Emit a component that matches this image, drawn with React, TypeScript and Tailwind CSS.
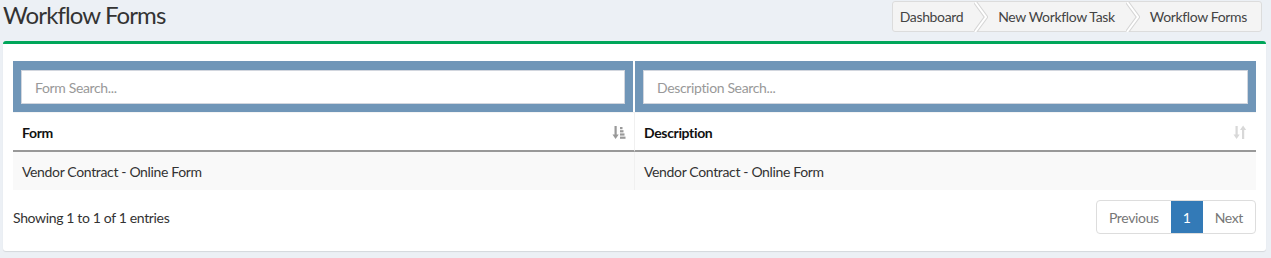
import React from 'react';

const font = { fontFamily: 'Lato, "Liberation Sans", sans-serif', letterSpacing: '-0.35px' };

const Chevron: React.FC = () => (
  <svg width="14" height="30" viewBox="0 0 14 30" className="shrink-0">
    <polyline points="1,0 12,15 1,30" fill="none" stroke="#d6d6d6" strokeWidth="4" />
    <polyline points="1,0 12,15 1,30" fill="none" stroke="#ffffff" strokeWidth="2" />
  </svg>
);

const SortAsc: React.FC = () => (
  <svg width="14" height="15" viewBox="0 0 14 15" fill="#999">
    <rect x="2.5" y="1" width="2.2" height="9.5" />
    <polygon points="0.5,9.5 6.7,9.5 3.6,14" />
    <rect x="8" y="2" width="2.5" height="2.2" />
    <rect x="8" y="5.2" width="3.5" height="2.2" />
    <rect x="8" y="8.4" width="4.5" height="2.2" />
    <rect x="8" y="11.6" width="5.5" height="2.2" />
  </svg>
);

const SortBoth: React.FC = () => (
  <svg width="14" height="15" viewBox="0 0 14 15" fill="#d8d8d8">
    <rect x="2.5" y="1" width="2.2" height="9.5" />
    <polygon points="0.5,9.5 6.7,9.5 3.6,14" />
    <rect x="9" y="4.5" width="2.2" height="9.5" />
    <polygon points="7,5 13.2,5 10.1,0.5" />
  </svg>
);

const App: React.FC = () => {
  const rows = [{ form: 'Vendor Contract - Online Form', description: 'Vendor Contract - Online Form' }];
  return (
    <div className="min-h-[258px] w-[1271px] bg-[#ecf0f5] text-[#333] text-[14px]" style={font}>
      {/* Header */}
      <div className="flex items-start justify-between h-[41px] pl-[3px] pr-[9px]">
        <h1 className="text-[24px] leading-[29px] text-[#333] font-normal tracking-[-0.9px]">Workflow Forms</h1>
        <div className="flex items-stretch h-[31px] mt-[1px] border border-[#dcdcdc] rounded-[3px] bg-[#f4f4f4] text-[#444]">
          <span className="flex items-center pl-[7px] pr-[11px]">Dashboard</span>
          <Chevron />
          <span className="flex items-center pl-[10px] pr-[11px]">New Workflow Task</span>
          <Chevron />
          <span className="flex items-center pl-[10px] pr-[14px]">Workflow Forms</span>
        </div>
      </div>

      {/* Box */}
      <div className="mx-[3px] mr-[5px] bg-white border-t-[3px] border-[#00a65a] rounded-[3px] shadow-[0_1px_1px_rgba(0,0,0,0.1)] px-[10px] pt-[17px] pb-[17px]">
        <div className="grid grid-cols-[622px_1fr]">
          {/* search row */}
          <div className="bg-[#7096b8] pl-[8px] pr-[8px] pt-[9px] pb-[8px] border-r-2 border-white">
            <input
              placeholder="Form Search..."
              className="w-full h-[34px] bg-white border border-[#d2d6de] px-[13px] text-[14px] placeholder:text-[#999] outline-none"
              style={font}
            />
          </div>
          <div className="bg-[#7096b8] pl-[8px] pr-[8px] pt-[9px] pb-[8px]">
            <input
              placeholder="Description Search..."
              className="w-full h-[34px] bg-white border border-[#d2d6de] px-[13px] text-[14px] placeholder:text-[#999] outline-none"
              style={font}
            />
          </div>

          {/* header row */}
          <div className="flex items-center justify-between h-[40px] pl-[9px] pr-[8px] pt-[1px] border-t border-[#f4f4f4] border-r border-r-[#f0f0f0] border-b-2 border-b-[#999] font-bold text-[#111]">
            <span>Form</span>
            <SortAsc />
          </div>
          <div className="flex items-center justify-between h-[40px] pl-[9px] pr-[9px] pt-[1px] border-t border-[#f4f4f4] border-b-2 border-b-[#999] font-bold text-[#111]">
            <span>Description</span>
            <SortBoth />
          </div>

          {/* body rows */}
          {rows.map((r, i) => (
            <React.Fragment key={i}>
              <div className="flex items-center h-[38px] pl-[9px] bg-[#f9f9f9] border-r border-[#f0f0f0]">{r.form}</div>
              <div className="flex items-center h-[38px] pl-[9px] bg-[#f9f9f9]">{r.description}</div>
            </React.Fragment>
          ))}
        </div>

        {/* footer */}
        <div className="flex items-center justify-between mt-[10px]">
          <span className="text-[#333]">Showing 1 to 1 of 1 entries</span>
          <div className="flex h-[34px] rounded-[4px] border border-[#ddd] overflow-hidden">
            <span className="flex items-center px-[12px] text-[#777]">Previous</span>
            <span className="flex items-center px-[12px] bg-[#337ab7] text-white">1</span>
            <span className="flex items-center px-[12px] text-[#777]">Next</span>
          </div>
        </div>
      </div>
    </div>
  );
};

export default App;
